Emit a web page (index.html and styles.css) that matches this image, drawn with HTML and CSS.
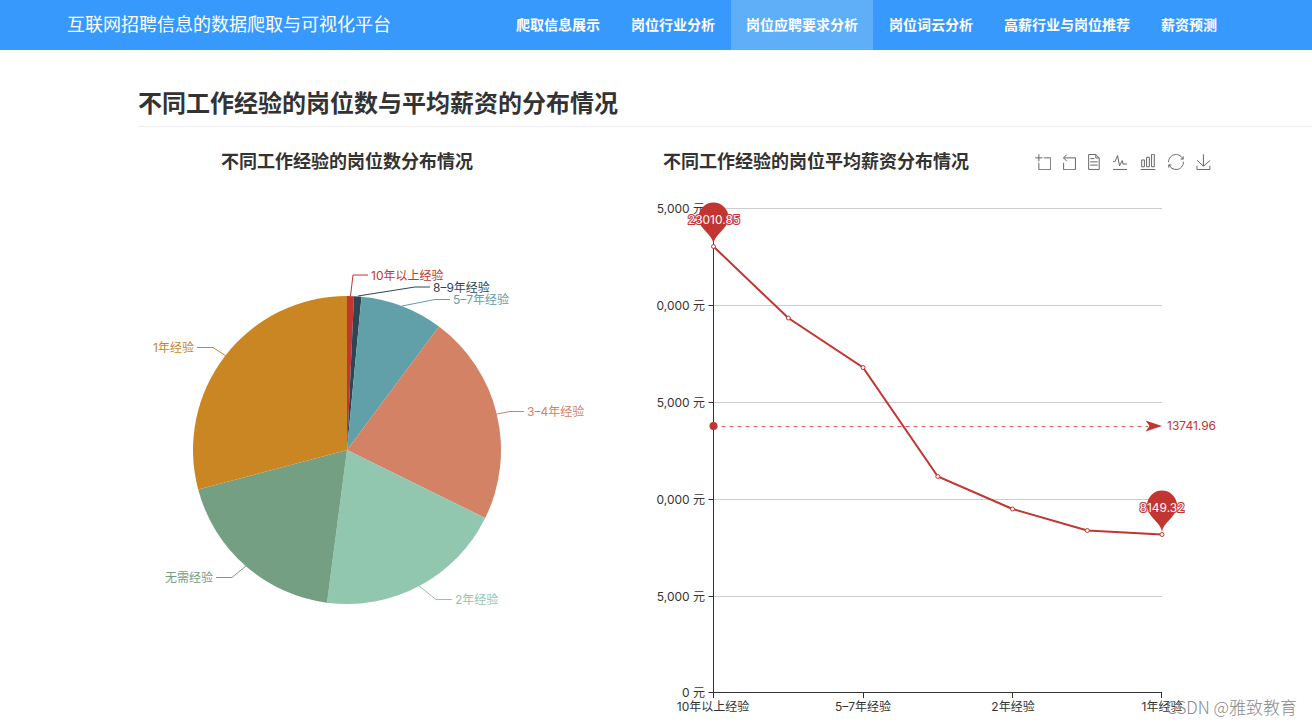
FILE: index.html
```html
<!DOCTYPE html>
<html lang="zh-CN">
<head>
<meta charset="utf-8">
<meta name="viewport" content="width=device-width, initial-scale=1">
<title>互联网招聘信息的数据爬取与可视化平台</title>
<link rel="stylesheet" href="styles.css">
</head>
<body>
<header class="navbar">
  <a class="brand" href="#">互联网招聘信息的数据爬取与可视化平台</a>
  <nav class="nav">
    <a href="#">爬取信息展示</a>
    <a href="#">岗位行业分析</a>
    <a class="active" href="#" aria-current="page">岗位应聘要求分析</a>
    <a href="#">岗位词云分析</a>
    <a href="#">高薪行业与岗位推荐</a>
    <a href="#">薪资预测</a>
  </nav>
</header>
<main class="content">
  <h1 class="page-title">不同工作经验的岗位数与平均薪资的分布情况</h1>
  <div class="charts">
    <section class="panel">
      <div class="panel-head centered">
        <h2>不同工作经验的岗位数分布情况</h2>
      </div>
      <svg class="chart" viewBox="138 187 418 538" role="img" aria-label="岗位数分布饼图">
        <path class="c1" d="M347 450V296A154 154 0 0 1 354 296.200Z"/>
        <path class="c2" d="M347 450L354 296.200A154 154 0 0 1 361.500 296.700Z"/>
        <path class="c3" d="M347 450L361.500 296.700A154 154 0 0 1 439 326.500Z"/>
        <path class="c4" d="M347 450L439 326.500A154 154 0 0 1 485.200 518Z"/>
        <path class="c5" d="M347 450L485.200 518A154 154 0 0 1 327 602.700Z"/>
        <path class="c6" d="M347 450L327 602.700A154 154 0 0 1 198.200 489.600Z"/>
        <path class="c7" d="M347 450L198.200 489.600A154 154 0 0 1 347 296Z"/>
        <g class="leaders">
          <path class="s1" d="M350.500 296L353 275H368"/>
          <path class="s2" d="M358 296L415 287H430"/>
          <path class="s3" d="M402 306L435 299.500H450"/>
          <path class="s4" d="M497 414L510 411.500H524"/>
          <path class="s5" d="M419 586L436 599.500H452"/>
          <path class="s6" d="M246 566L232 577.500H216"/>
          <path class="s7" d="M226 356L213 347.500H197"/>
        </g>
        <text class="c1" x="371" y="280">10年以上经验</text>
        <text class="c2" x="433" y="292">8–9年经验</text>
        <text class="c3" x="453" y="304">5–7年经验</text>
        <text class="c4" x="527" y="416">3–4年经验</text>
        <text class="c5" x="455" y="604">2年经验</text>
        <text class="c6 end" x="213" y="582">无需经验</text>
        <text class="c7 end" x="194" y="352">1年经验</text>
      </svg>
    </section>
    <section class="panel">
      <div class="panel-head">
        <h2>不同工作经验的岗位平均薪资分布情况</h2>
        <div class="toolbox">
          <button type="button" aria-label="区域缩放"><svg width="16" height="16" viewBox="-1 -1 60 60"><path d="M0 13.500h26.900M13.500 26.900V0M32.100 13.500H58V58H13.500V32.100"/></svg></button>
          <button type="button" aria-label="区域缩放还原"><svg width="13" height="16" viewBox="8 -1 49 60"><path d="M22 1.400L9.900 13.500l12.300 12.300M10.300 13.500H54.900v44.600H10.300v-26"/></svg></button>
          <button type="button" aria-label="数据视图"><svg width="12" height="16" viewBox="9 0 45 60"><path d="M17.500 17.300H33M45.400 29.500h-28M11.500 2v56H51V14.800L38.400 2zM38.400 2.200v12.700H51M45.400 41.700h-28"/></svg></button>
          <button type="button" aria-label="切换为折线图"><svg width="16" height="16" viewBox="1 1 57 59"><path d="M4.100 28.900h7.100l9.300-22 7.400 38 9.700-19.700 3 12.800h14.900M4.100 58h51.400"/></svg></button>
          <button type="button" aria-label="切换为柱状图"><svg width="16" height="16" viewBox="1 1 58 59"><path d="M6.700 22.900h10V48h-10zM24.900 13h10v35h-10zM43.200 2h10v46h-10zM3.100 58h53.700"/></svg></button>
          <button type="button" aria-label="还原"><svg width="16" height="16" viewBox="0 0 60 60"><path d="M47 18.900h9.800V8.700M56.300 20.100C52.100 9 40.500.6 26.800 2.100 12.600 3.700 1.600 16.200 2.100 30.600M13 41.100H3.100v10.200M3.700 39.900c4.200 11.100 15.800 19.500 29.500 18 14.200-1.600 25.200-14.100 24.700-28.500"/></svg></button>
          <button type="button" aria-label="保存为图片"><svg width="15" height="16" viewBox="1 -1 57 61"><path d="M4.700 22.900L29.300 45.500 54.700 23.400M4.600 43.600V58h49.200V43.600M29.200 45.100V0"/></svg></button>
        </div>
      </div>
      <svg class="chart" viewBox="657 187 560 538" role="img" aria-label="平均薪资折线图">
        <path class="grid" d="M714 208.500H1162M714 305.500H1162M714 402.500H1162M714 499.500H1162M714 596.500H1162"/>
        <path class="axis" d="M713.500 208V698M708.500 208.500h5M708.500 305.500h5M708.500 402.500h5M708.500 499.500h5M708.500 596.500h5M708.500 692.500H1162M863.500 693v5M1012.500 693v5M1161.500 693v5"/>
        <g class="label end">
          <text x="705" y="213">5,000 元</text>
          <text x="705" y="310">0,000 元</text>
          <text x="705" y="407">5,000 元</text>
          <text x="705" y="504">0,000 元</text>
          <text x="705" y="601">5,000 元</text>
          <text x="705" y="697">0 元</text>
        </g>
        <g class="label mid">
          <text x="713" y="711">10年以上经验</text>
          <text x="863" y="711">5–7年经验</text>
          <text x="1013" y="711">2年经验</text>
          <text x="1162" y="711">1年经验</text>
        </g>
        <path class="average" d="M713.500 426.500H1148"/>
        <circle class="c1" cx="713.500" cy="426" r="4"/>
        <path class="c1" d="M1162 426L1145.500 420.500 1149.500 426 1145.500 431.500Z"/>
        <text class="c1" x="1167" y="430">13741.96</text>
        <path class="series" d="M713.500 246.500L788.300 318 863 367.500 937.800 476.500 1012.500 509 1087.300 530.500 1162 534.500"/>
        <path class="c1" d="M713.500 244C712.500 234 698.500 229 698.500 217.500A15 15 0 0 1 728.500 217.500C728.500 229 714.500 234 713.500 244Z"/>
        <path class="c1" d="M1162 532C1161 522 1147 517 1147 505.500A15 15 0 0 1 1177 505.500C1177 517 1163 522 1162 532Z"/>
        <g class="points">
          <circle cx="713.500" cy="246.500" r="2"/>
          <circle cx="788.300" cy="318" r="2"/>
          <circle cx="863" cy="367.500" r="2"/>
          <circle cx="937.800" cy="476.500" r="2"/>
          <circle cx="1012.500" cy="509" r="2"/>
          <circle cx="1087.300" cy="530.500" r="2"/>
          <circle cx="1162" cy="534.500" r="2"/>
        </g>
        <text class="pin-label mid" x="714" y="224">23010.85</text>
        <text class="pin-label mid" x="1162" y="512">8149.32</text>
      </svg>
    </section>
  </div>
</main>
<div class="watermark">CSDN @雅致教育</div>
</body>
</html>
```
FILE: styles.css
```css
* { box-sizing: border-box; }
body {
  margin: 0;
  overflow-x: hidden;
  background: #fff;
  color: #333;
  font-family: "Liberation Sans", "Noto Sans CJK SC", sans-serif;
  font-size: 14px;
  line-height: 20px;
}
.navbar {
  display: flex;
  justify-content: space-between;
  height: 50px;
  padding: 0 80px 0 67px;
  background: #3799fc;
}
.navbar a {
  color: #fff;
  line-height: 50px;
  text-decoration: none;
  white-space: nowrap;
}
.brand { font-size: 18px; }
.nav { display: flex; gap: 1px; }
.nav a { padding: 0 15px; font-weight: 700; }
.nav .active { background: #5eaef8; }
.content { padding: 38px 0 0 138px; }
.page-title {
  margin: 0;
  padding-bottom: 6px;
  border-bottom: 1px solid #eee;
  font-size: 24px;
  font-weight: 700;
  line-height: 32px;
}
.charts {
  display: grid;
  grid-template-columns: 418fr 560fr;
  gap: 101px;
  padding: 20px 95px 0 0;
}
.panel { min-width: 0; }
.panel-head {
  display: flex;
  justify-content: space-between;
  align-items: center;
  height: 30px;
  margin-bottom: 10px;
  padding: 0 6px;
}
.panel-head.centered { justify-content: center; }
.panel-head h2 {
  margin: 0;
  font-size: 18px;
  font-weight: 700;
  line-height: 30px;
  white-space: nowrap;
}
.toolbox { display: flex; gap: 12px; }
.toolbox button {
  display: flex;
  padding: 0;
  border: 0;
  background: none;
  cursor: pointer;
}
.toolbox path {
  fill: none;
  stroke: #666;
  stroke-width: 1px;
  vector-effect: non-scaling-stroke;
}
.chart {
  display: block;
  width: 100%;
  height: auto;
  overflow: visible;
  font-family: Inter, "Noto Sans CJK SC", sans-serif;
  font-size: 12px;
}
.c1 { fill: #c23531; }
.c2 { fill: #2f4554; }
.c3 { fill: #61a0a8; }
.c4 { fill: #d48265; }
.c5 { fill: #91c7ae; }
.c6 { fill: #749f83; }
.c7 { fill: #ca8622; }
.leaders { fill: none; stroke-width: 1px; }
.s1 { stroke: #c23531; }
.s2 { stroke: #2f4554; }
.s3 { stroke: #61a0a8; }
.s4 { stroke: #d48265; }
.s5 { stroke: #91c7ae; }
.s6 { stroke: #749f83; }
.s7 { stroke: #ca8622; }
.end { text-anchor: end; }
.mid { text-anchor: middle; }
.label { fill: #333; }
.grid { stroke: #ccc; }
.axis { fill: none; stroke: #333; }
.average { stroke: #d0625f; stroke-dasharray: 4 4; }
.series { fill: none; stroke: #c23531; stroke-width: 2px; }
.points { fill: #fff; stroke: #c23531; }
.pin-label {
  fill: #fff;
  stroke: #c23531;
  stroke-width: 2px;
  paint-order: stroke;
}
.watermark {
  position: absolute;
  right: 15px;
  top: 695px;
  color: #888;
  font-family: "Noto Sans CJK SC", sans-serif;
  font-size: 17px;
  font-weight: 300;
  line-height: 24px;
}
```
